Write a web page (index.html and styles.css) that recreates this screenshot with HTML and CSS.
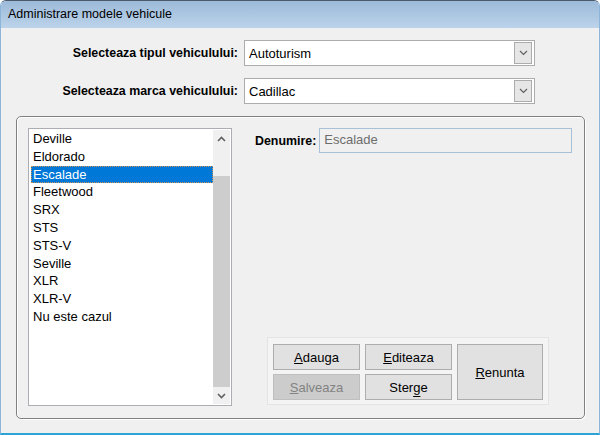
FILE: index.html
```html
<!DOCTYPE html>
<html>
  <head>
    <title>Administrare modele vehicule</title>
    <link rel="stylesheet" href="styles.css">
  </head>
  <body>
    <div class="window">
      <div class="titlebar">Administrare modele vehicule</div>

      <div class="content">
        <div class="field">
          <label class="field-label">Selecteaza tipul vehiculului:</label>
          <div class="combo">
            <span class="combo-text">Autoturism</span>
            <span class="combo-btn">
              <svg width="9" height="6" viewBox="0 0 9 6"><polyline points="1,1 4.5,4.5 8,1" fill="none" stroke="#606060" stroke-width="1.2"/></svg>
            </span>
          </div>
        </div>

        <div class="field">
          <label class="field-label">Selecteaza marca vehiculului:</label>
          <div class="combo">
            <span class="combo-text">Cadillac</span>
            <span class="combo-btn">
              <svg width="9" height="6" viewBox="0 0 9 6"><polyline points="1,1 4.5,4.5 8,1" fill="none" stroke="#606060" stroke-width="1.2"/></svg>
            </span>
          </div>
        </div>

        <div class="group">
          <div class="listbox">
            <ul class="items">
              <li>Deville</li>
              <li>Eldorado</li>
              <li class="selected">Escalade</li>
              <li>Fleetwood</li>
              <li>SRX</li>
              <li>STS</li>
              <li>STS-V</li>
              <li>Seville</li>
              <li>XLR</li>
              <li>XLR-V</li>
              <li>Nu este cazul</li>
            </ul>
            <div class="scrollbar">
              <div class="scroll-btn">
                <svg width="9" height="6" viewBox="0 0 9 6"><polyline points="1,5 4.5,1.5 8,5" fill="none" stroke="#606060" stroke-width="1.6"/></svg>
              </div>
              <div class="scroll-gap"></div>
              <div class="scroll-thumb"></div>
              <div class="scroll-btn">
                <svg width="9" height="6" viewBox="0 0 9 6"><polyline points="1,1 4.5,4.5 8,1" fill="none" stroke="#606060" stroke-width="1.6"/></svg>
              </div>
            </div>
          </div>

          <div class="details">
            <div class="name-row">
              <label class="name-label">Denumire:</label>
              <div class="name-input">Escalade</div>
            </div>

            <div class="buttons">
              <button class="btn"><u>A</u>dauga</button>
              <button class="btn"><u>E</u>diteaza</button>
              <button class="btn btn-tall"><u>R</u>enunta</button>
              <button class="btn" disabled><u>S</u>alveaza</button>
              <button class="btn">Ster<u class="low">g</u>e</button>
            </div>
          </div>
        </div>
      </div>
    </div>
  </body>
</html>
```

FILE: styles.css
```css
body {
  margin: 0;
  font-family: "Liberation Sans", Arial, sans-serif;
  font-size: 13px;
  color: #000;
  background: #fff;
}

.window {
  width: 600px;
  height: 435px;
  box-sizing: border-box;
  display: flex;
  flex-direction: column;
  background: #f0f0f0;
  border: 1px solid #8db5d9;
  border-top-color: #4a5a6c;
  border-bottom: 2px solid #2ea3d8;
  border-radius: 6px 6px 0 0;
  overflow: hidden;
}

.titlebar {
  height: 27px;
  padding-left: 7px;
  line-height: 27px;
  font-size: 12.5px;
  background: linear-gradient(#9cbad9, #bcd3ea);
}

.content {
  flex: 1;
  padding: 12px 14px 0 15px;
}

.field {
  display: flex;
  align-items: center;
  margin-bottom: 12px;
}

.field-label {
  width: 222px;
  margin-right: 6px;
  text-align: right;
  font-size: 12.4px;
  font-weight: bold;
}

.combo {
  width: 291px;
  height: 26px;
  box-sizing: border-box;
  display: flex;
  align-items: center;
  background: #fff;
  border: 1px solid #acacac;
}

.combo-text {
  flex: 1;
  padding-left: 4px;
}

.combo-btn {
  width: 16px;
  height: 20px;
  margin-right: 2px;
  display: flex;
  align-items: center;
  justify-content: center;
  background: #e6e6e6;
  border: 1px solid #acacac;
}

.group {
  height: 303px;
  box-sizing: border-box;
  display: flex;
  padding: 11px 12px 12px 11px;
  border: 1px solid #808080;
  border-radius: 5px;
  box-shadow: inset 1px 1px 0 #fff, 1px 1px 0 #fff;
}

.listbox {
  width: 204px;
  box-sizing: border-box;
  display: flex;
  padding: 1px;
  background: #fff;
  border: 1px solid #abadb3;
}

.items {
  flex: 1;
  margin: 0;
  padding: 0;
  list-style: none;
}

.items li {
  height: 17.8px;
  line-height: 18.6px;
  margin-left: 1px;
  padding-left: 2px;
  box-sizing: border-box;
  white-space: nowrap;
}

.items li.selected {
  background: #0078d7;
  color: #fff;
  outline: 1px dotted #c7945a;
  outline-offset: -1px;
}

.scrollbar {
  width: 17px;
  display: flex;
  flex-direction: column;
  background: #f0f0f0;
}

.scroll-btn {
  height: 17px;
  display: flex;
  align-items: center;
  justify-content: center;
}

.scroll-gap {
  height: 29px;
}

.scroll-thumb {
  flex: 1;
  background: #cdcdcd;
}

.details {
  flex: 1;
  display: flex;
  flex-direction: column;
}

.name-row {
  display: flex;
  align-items: center;
  margin-left: 23px;
}

.name-label {
  margin-right: 3px;
  font-size: 12.4px;
  font-weight: bold;
}

.name-input {
  flex: 1;
  height: 25px;
  box-sizing: border-box;
  padding-left: 4px;
  line-height: 22px;
  color: #6d6d6d;
  background: #f0f0f0;
  border: 1px solid #a9c0d9;
}

.buttons {
  width: 282px;
  box-sizing: border-box;
  margin: auto 0 1px 35px;
  padding: 6px 5px 4px 5px;
  display: grid;
  grid-template-columns: 87px 87px 86px;
  grid-template-rows: 26px 26px;
  gap: 4px 5px;
  background: #f4f4f4;
  border: 1px solid #e4e4e4;
}

.btn {
  font-family: "Liberation Sans", Arial, sans-serif;
  font-size: 13px;
  color: #000;
  background: #e1e1e1;
  border: 1px solid #adadad;
  padding: 0;
}

.btn u {
  text-decoration-skip-ink: none;
}

.btn u.low {
  text-underline-offset: 4px;
}

.btn-tall {
  grid-column: 3;
  grid-row: 1 / 3;
}

.btn:disabled {
  color: #838383;
  background: #cccccc;
  border-color: #bfbfbf;
}
```
